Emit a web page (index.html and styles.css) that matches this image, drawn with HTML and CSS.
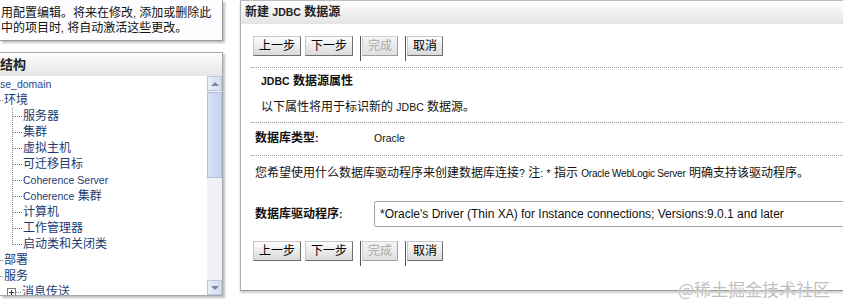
FILE: index.html
```html
<!DOCTYPE html>
<html lang="zh-CN">
<head>
    <meta charset="UTF-8">
    <title>新建 JDBC 数据源</title>
    <link rel="stylesheet" href="styles.css">
</head>
<body>
<div class="page">
    <div class="side">
        <div class="note">用配置编辑。将来在修改<span class="lat">,</span> 添加或删除此<br>中的项目时<span class="lat">,</span> 将自动激活这些更改。</div>
        <div class="tree-box">
            <div class="box-head">结构</div>
            <div class="tree-body">
                <ul class="tree">
                    <li class="root"><span class="lat">se_domain</span></li>
                    <li><span class="dash short"></span>环境
                        <ul class="kids">
                            <li><span class="dash"></span>服务器</li>
                            <li><span class="dash"></span>集群</li>
                            <li><span class="dash"></span>虚拟主机</li>
                            <li><span class="dash"></span>可迁移目标</li>
                            <li><span class="dash"></span><span class="lat">Coherence Server</span></li>
                            <li><span class="dash"></span><span class="lat">Coherence</span> 集群</li>
                            <li><span class="dash"></span>计算机</li>
                            <li><span class="dash"></span>工作管理器</li>
                            <li><span class="dash"></span>启动类和关闭类</li>
                        </ul>
                    </li>
                    <li><span class="dash short"></span>部署</li>
                    <li><span class="dash short"></span>服务
                        <ul class="sub">
                            <li><span class="plus"></span><span class="dash tiny"></span>消息传送</li>
                        </ul>
                    </li>
                </ul>
                <div class="scroll">
                    <div class="arrow up"></div>
                    <div class="thumb"></div>
                    <div class="track"></div>
                    <div class="arrow down"></div>
                </div>
            </div>
        </div>
    </div>

    <div class="main">
        <div class="main-head">新建 <span class="lat">JDBC</span> 数据源</div>
        <div class="bar">
            <span class="btn">上一步</span>
            <span class="btn">下一步</span>
            <span class="sep"></span>
            <span class="btn off">完成</span>
            <span class="sep"></span>
            <span class="btn">取消</span>
        </div>

        <div class="section props">
            <div class="sec-title"><span class="lat">JDBC</span> 数据源属性</div>
            <div class="sec-desc">以下属性将用于标识新的 <span class="lat">JDBC</span> 数据源。</div>
        </div>

        <div class="section type">
            <div class="row">
                <div class="label">数据库类型<span class="lat">:</span></div>
                <div class="value lat">Oracle</div>
            </div>
        </div>

        <div class="section driver">
            <div class="ask">您希望使用什么数据库驱动程序来创建数据库连接<span class="lat">?</span> 注<span class="lat">:</span> <span class="lat">*</span> 指示 <span class="small-lat">Oracle WebLogic Server</span> 明确支持该驱动程序。</div>
            <div class="row pick">
                <div class="label">数据库驱动程序<span class="lat">:</span></div>
                <div class="select">*Oracle's Driver (Thin XA) for Instance connections; Versions:9.0.1 and later</div>
            </div>
        </div>

        <div class="bar bottom">
            <span class="btn">上一步</span>
            <span class="btn">下一步</span>
            <span class="sep"></span>
            <span class="btn off">完成</span>
            <span class="sep"></span>
            <span class="btn">取消</span>
        </div>
    </div>

    <div class="watermark">@稀土掘金技术社区</div>
</div>
</body>
</html>
```
FILE: styles.css
```css
body {
    margin: 0;
    background: #fff;
    color: #111;
    font-family: "Liberation Sans", "Noto Sans CJK SC", sans-serif;
    font-size: 12px;
}
.page {
    position: relative;
    display: flex;
    align-items: flex-start;
    height: 304px;
    overflow: hidden;
}
.lat {
    font-size: 10.5px;
}
.small-lat {
    font-size: 10px;
    letter-spacing: -0.2px;
}

/* left column */
.side {
    width: 223px;
    flex: none;
}
.note {
    height: 30px;
    padding: 6px 0 4px 1px;
    line-height: 15px;
    white-space: nowrap;
    background: #fdfdff;
    border-right: 1px solid #9c9c9c;
    border-bottom: 1px solid #9c9c9c;
    box-shadow: 2px 2px 2px rgba(0, 0, 0, 0.25);
}
.tree-box {
    margin-top: 11px;
    border: 1px solid #a8a8a8;
    border-left: none;
    box-shadow: 2px 2px 2px rgba(0, 0, 0, 0.25);
}
.box-head {
    height: 23px;
    line-height: 23px;
    font-size: 13px;
    font-weight: bold;
    color: #222;
    background: linear-gradient(#fdfdfd, #e5e5e5);
}
.tree-body {
    display: flex;
    height: 219px;
}
.tree {
    flex: 1;
    margin: 0;
    padding: 0;
    list-style: none;
    line-height: 16px;
    color: #1d3b73;
    white-space: nowrap;
    overflow: hidden;
}
.tree ul {
    margin: 0;
    padding: 0;
    list-style: none;
}
.root {
    color: #29498a;
}
.kids {
    padding-left: 12px !important;
    background: repeating-linear-gradient(to bottom, #8a8a8a 0 1px, transparent 1px 2px) 12px 0 / 1px calc(100% - 8px) no-repeat;
}
.dash {
    display: inline-block;
    width: 10px;
    margin-right: 1px;
    border-top: 1px dotted #808080;
    vertical-align: middle;
}
.dash.short {
    width: 3px;
}
.dash.tiny {
    width: 5px;
}
.sub {
    padding-left: 7px !important;
}
.plus {
    display: inline-block;
    width: 7px;
    height: 7px;
    border: 1px solid #7a7a7a;
    vertical-align: middle;
    background:
        linear-gradient(#333, #333) center / 5px 1px no-repeat,
        linear-gradient(#333, #333) center / 1px 5px no-repeat,
        #fff;
}

/* scrollbar */
.scroll {
    width: 15px;
    display: flex;
    flex-direction: column;
    background: #f0f1f4;
}
.arrow {
    height: 15px;
    box-sizing: border-box;
    border: 1px solid #b9c8e0;
    background: linear-gradient(to right, #e9eef7, #d2ddef);
    display: flex;
    align-items: center;
    justify-content: center;
}
.arrow::after {
    content: "";
    border-left: 4px solid transparent;
    border-right: 4px solid transparent;
}
.arrow.up::after {
    border-bottom: 4px solid #7886a4;
}
.arrow.down::after {
    border-top: 4px solid #7886a4;
}
.thumb {
    height: 86px;
    margin-top: 1px;
    box-sizing: border-box;
    border: 1px solid #aec0df;
    background: linear-gradient(to right, #d6e2f5, #c4d4ee);
}
.track {
    flex: 1;
}

/* right panel */
.main {
    flex: 1;
    min-width: 0;
    margin-left: 17px;
    height: 289px;
    border-top: 1px solid #bdbdbd;
    border-left: 1px solid #b0b0b0;
    border-bottom: 1px solid #9a9a9a;
    box-shadow: 0 2px 2px rgba(0, 0, 0, 0.2);
    overflow: hidden;
}
.main-head {
    height: 23px;
    line-height: 23px;
    padding-left: 4px;
    font-weight: bold;
    color: #222;
    background: linear-gradient(#fdfdfd, #e4e4e4);
}
.bar {
    display: flex;
    align-items: flex-start;
    margin: 12px 0 0 12px;
}
.bar.bottom {
    margin-top: 7px;
}
.btn {
    height: 20px;
    box-sizing: border-box;
    padding: 0 5px;
    margin-right: 4px;
    line-height: 18px;
    border: 1px solid;
    border-color: #c8c8c8 #6e6e6e #6e6e6e #c8c8c8;
    background: linear-gradient(#fefefe, #d9d9d9);
    color: #000;
}
.btn.off {
    color: #a9a9a9;
    border-color: #d2d2d2 #a0a0a0 #a0a0a0 #d2d2d2;
    background: linear-gradient(#f4f4f4, #e0e0e0);
}
.sep {
    width: 1px;
    height: 25px;
    margin: 0 1px 0 3px;
    background: #555;
}
.section {
    margin-left: 10px;
    border-top: 1px dotted #9a9a9a;
    line-height: 14px;
    white-space: nowrap;
}
.props {
    margin-top: 6px;
    padding: 6px 0 8px 10px;
}
.sec-title {
    font-weight: bold;
}
.sec-desc {
    margin-top: 12px;
}
.type {
    padding: 8px 0 10px 4px;
}
.driver {
    padding: 10px 0 7px 4px;
}
.row {
    display: flex;
    align-items: center;
}
.pick {
    margin-top: 20px;
}
.label {
    width: 119px;
    flex: none;
    font-weight: bold;
}
.select {
    flex: none;
    width: 520px;
    height: 26px;
    box-sizing: border-box;
    padding-left: 5px;
    line-height: 24px;
    border: 1px solid #a5a5a5;
    border-radius: 2px;
    font-size: 12px;
    color: #111;
}

.watermark {
    position: absolute;
    right: 13px;
    bottom: 5px;
    font-family: "Noto Sans CJK SC", sans-serif;
    font-size: 17px;
    line-height: 20px;
    color: #bfbfbf;
    text-shadow: 0 0 1px #fff;
}
```
